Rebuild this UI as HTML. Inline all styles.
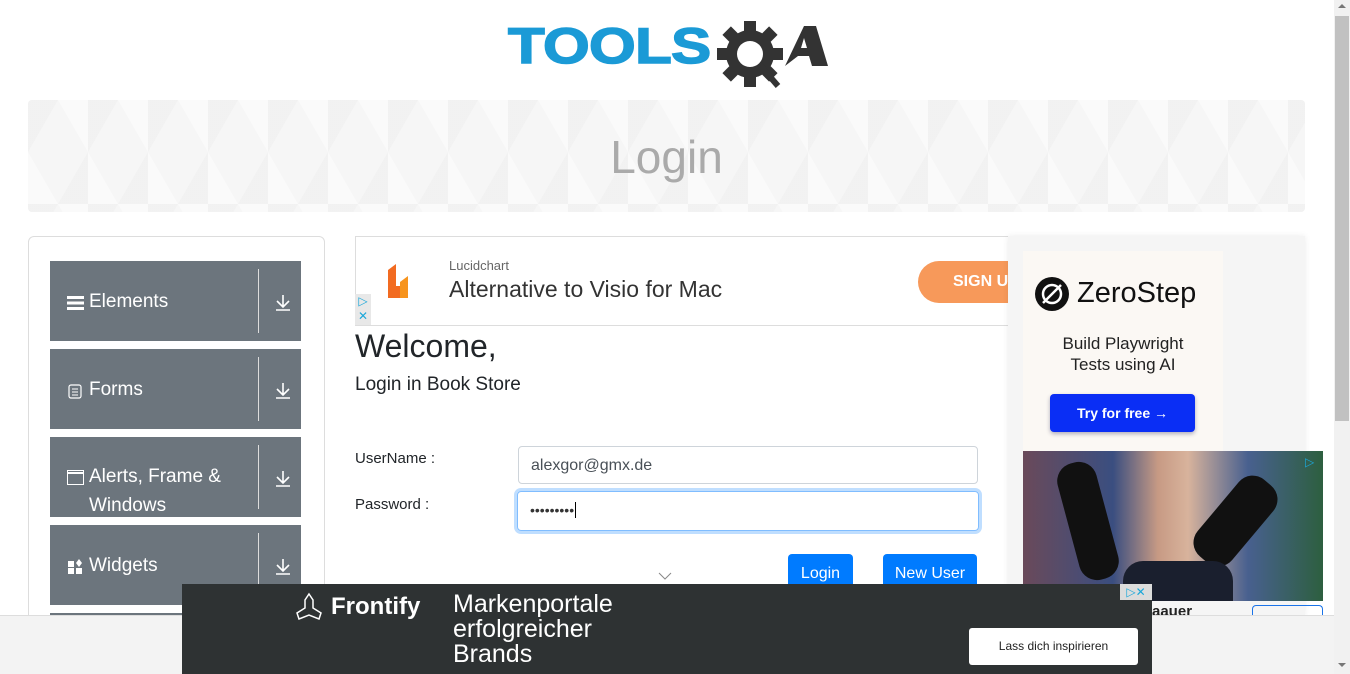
<!DOCTYPE html>
<html><head><meta charset="utf-8"><style>
*{box-sizing:border-box;margin:0;padding:0}
body{width:1350px;height:674px;overflow:hidden;background:#fff;font-family:"Liberation Sans",sans-serif;position:relative;color:#212529}
.abs{position:absolute}
.banner{left:28px;top:100px;width:1277px;height:112px;background:#f6f6f6;
background-image:linear-gradient(60deg,rgba(255,255,255,.45) 25%,transparent 25%,transparent 75%,rgba(255,255,255,.45) 75%),linear-gradient(-60deg,rgba(236,236,236,.45) 25%,transparent 25%,transparent 75%,rgba(236,236,236,.45) 75%);background-size:60px 104px;border-radius:4px}
.banner div{text-align:center;font-size:46px;color:#aaa;font-weight:300;margin-top:30px}
.side{left:28px;top:236px;width:297px;height:400px;border:1px solid #ddd;border-radius:6px}
.item{position:absolute;left:50px;width:251px;height:80px;background:#6c757d;color:#fff;font-size:19px}
.item .t{position:absolute;left:39px;top:26px;line-height:29px}
.item .sep{position:absolute;left:208px;top:8px;width:1px;height:64px;background:#ddd}
.item .ar{position:absolute;left:224px;top:32px;width:18px;height:18px}
.item .ic{position:absolute;left:17px;top:34px}
.lbl{font-size:15px;color:#212529}
.btn{background:#007bff;color:#fff;font-size:16px;border-radius:4px;text-align:center;line-height:36px}
</style></head><body>

<!-- logo -->
<div class="abs" style="left:508px;top:22px;font-weight:bold;font-size:50px;color:#1b9ad6;line-height:48px;transform:scaleX(1.2);transform-origin:left;letter-spacing:-0.5px;-webkit-text-stroke:1.5px #1b9ad6">TOOLS</div>
<svg class="abs" style="left:712px;top:16px" width="120" height="76" viewBox="0 0 120 76">
<g fill="#333">
<circle cx="38" cy="38" r="24"/>
<rect x="32" y="5" width="12" height="66"/><rect x="5" y="32" width="66" height="12"/>
<rect x="32" y="5" width="12" height="66" transform="rotate(45 38 38)"/><rect x="32" y="5" width="12" height="66" transform="rotate(-45 38 38)"/>
</g>
<circle cx="38" cy="38" r="13" fill="#fff"/>
<path d="M47 48 L66 70" stroke="#333" stroke-width="6"/>
<path d="M73 50 L92 10 L104 10 L116 50 L100 50 L97 40 L86 40 Z M89 32 L95 32 L92 22 Z" fill="#333" fill-rule="evenodd"/>
</svg>

<div class="abs banner"><div>Login</div></div>

<div class="abs side"></div>
<div class="item" style="top:261px"><svg class="ic" width="17" height="14" style="top:35px"><rect y="0" width="17" height="3" fill="#fff"/><rect y="5.5" width="17" height="3" fill="#fff"/><rect y="11" width="17" height="3" fill="#fff"/></svg><div class="t">Elements</div><div class="sep"></div><svg class="ar" viewBox="0 0 18 18"><path d="M9 2v11M3 8l6 6 6-6M2 17h14" stroke="#fff" stroke-width="1.6" fill="none"/></svg></div>
<div class="item" style="top:349px"><svg class="ic" width="14" height="15" style="left:18px;top:35px"><rect x="1" y="1" width="12" height="13" rx="2" fill="none" stroke="#fff" stroke-width="1.2"/><path d="M4 5h6M4 8h6M4 11h6" stroke="#fff"/></svg><div class="t">Forms</div><div class="sep"></div><svg class="ar" viewBox="0 0 18 18"><path d="M9 2v11M3 8l6 6 6-6M2 17h14" stroke="#fff" stroke-width="1.6" fill="none"/></svg></div>
<div class="item" style="top:437px"><svg class="ic" width="17" height="15" style="left:17px;top:33px"><rect x=".5" y=".5" width="16" height="14" fill="none" stroke="#fff"/><path d="M1 3h15" stroke="#fff" stroke-width="2"/></svg><div class="t" style="top:25px">Alerts, Frame &amp;<br>Windows</div><div class="sep"></div><svg class="ar" viewBox="0 0 18 18"><path d="M9 2v11M3 8l6 6 6-6M2 17h14" stroke="#fff" stroke-width="1.6" fill="none"/></svg></div>
<div class="item" style="top:525px"><svg class="ic" width="15" height="15" style="left:18px;top:34px"><rect x="0" y="2" width="6" height="6" fill="#fff"/><rect x="0" y="9" width="6" height="6" fill="#fff"/><rect x="8" y="9" width="6" height="6" fill="#fff"/><path d="M11 0l3 4-3 4-3-4z" fill="#fff"/></svg><div class="t">Widgets</div><div class="sep"></div><svg class="ar" viewBox="0 0 18 18"><path d="M9 2v11M3 8l6 6 6-6M2 17h14" stroke="#fff" stroke-width="1.6" fill="none"/></svg></div>
<div class="abs" style="left:50px;top:613px;width:251px;height:3px;background:#6c757d"></div>

<!-- lucid ad -->
<div class="abs" style="left:355px;top:236px;width:660px;height:90px;border:1px solid #ddd;border-right:none;overflow:hidden">
<svg class="abs" style="left:32px;top:27px" width="22" height="34"><path d="M0 6 L8 0 L8 22 L20 22 L20 34 L0 34 Z" fill="#f26b21"/><path d="M12 18 L20 12 L20 34 L12 34Z" fill="#f7941d"/></svg>
<div class="abs" style="left:93px;top:21px;font-size:13px;color:#666">Lucidchart</div>
<div class="abs" style="left:93px;top:39px;font-size:23px;color:#333">Alternative to Visio for Mac</div>
<div class="abs" style="left:562px;top:24px;width:130px;height:42px;border-radius:21px;background:#f7995a;color:#fff;font-weight:bold;font-size:16px;line-height:42px;padding-left:35px">SIGN UP</div>
</div>
<div class="abs" style="left:355px;top:294px;width:16px;height:31px;background:#e8e8e8;color:#1ba7d9;font-size:12px;line-height:15px;text-align:center">▷<br>✕</div>

<div class="abs" style="left:355px;top:328px;font-size:32px;color:#212529">Welcome,</div>
<div class="abs" style="left:355px;top:374px;font-size:19px">Login in Book Store</div>
<div class="abs lbl" style="left:355px;top:450px">UserName :</div>
<div class="abs lbl" style="left:355px;top:496px">Password :</div>
<div class="abs" style="left:518px;top:446px;width:460px;height:38px;border:1px solid #ced4da;border-radius:4px;font-size:16px;color:#495057;padding:10px 12px">alexgor@gmx.de</div>
<div class="abs" style="left:517px;top:491px;width:462px;height:40px;border:1px solid #80bdff;box-shadow:0 0 0 3px rgba(0,123,255,.25);border-radius:4px;font-size:14px;color:#333;padding:10px 12px;letter-spacing:0">•••••••••<span style="border-left:1px solid #000;margin-left:1px"></span></div>
<svg class="abs" style="left:658px;top:572px" width="14" height="8"><path d="M1 1l6 6 6-6" stroke="#888" fill="none"/></svg>
<div class="abs btn" style="left:788px;top:554px;width:65px;height:40px;line-height:40px">Login</div>
<div class="abs btn" style="left:883px;top:554px;width:94px;height:40px;line-height:40px">New User</div>

<!-- right ad -->
<div class="abs" style="left:1008px;top:236px;width:297px;height:380px;background:#f5f5f5;box-shadow:0 0 6px rgba(0,0,0,.08)"></div>
<div class="abs" style="left:1023px;top:251px;width:200px;height:200px;background:#fbf8f4"></div>
<svg class="abs" style="left:1034px;top:276px" width="36" height="36"><circle cx="18" cy="18" r="17" fill="#111"/><circle cx="18" cy="18" r="9" fill="none" stroke="#fff" stroke-width="2.5"/><path d="M9 27L27 9" stroke="#fff" stroke-width="2.5"/></svg>
<div class="abs" style="left:1077px;top:277px;font-size:29px;color:#111">ZeroStep</div>
<div class="abs" style="left:1023px;top:333px;width:200px;text-align:center;font-size:17px;line-height:21px;color:#222">Build Playwright<br>Tests using AI</div>
<div class="abs" style="left:1050px;top:394px;width:145px;height:38px;background:#0a2ef5;border-radius:4px;color:#fff;font-weight:bold;font-size:14px;line-height:38px;text-align:center;box-shadow:0 2px 4px rgba(0,0,60,.3)">Try for free →</div>
<div class="abs" style="left:1023px;top:451px;width:300px;height:150px;overflow:hidden;background:linear-gradient(90deg,#6a4a5a 0%,#3a4e80 30%,#c79a84 45%,#d8b39c 55%,#48608f 75%,#2d5f3f 100%)">
<div class="abs" style="left:45px;top:10px;width:40px;height:120px;background:#111;border-radius:18px;transform:rotate(-15deg)"></div>
<div class="abs" style="left:190px;top:20px;width:45px;height:100px;background:#111;border-radius:18px;transform:rotate(40deg)"></div>
<div class="abs" style="left:100px;top:110px;width:110px;height:40px;background:#1a1f2e;border-radius:20px 20px 0 0"></div>
</div>
<div class="abs" style="left:1305px;top:455px;color:#1ba7d9;font-size:12px">▷</div>
<div class="abs" style="left:1252px;top:605px;width:71px;height:12px;border:1px solid #1a73e8;border-bottom:none;border-radius:4px 4px 0 0"></div>

<!-- bottom bar -->
<div class="abs" style="left:0;top:615px;width:1334px;height:59px;background:#f3f3f3;border-top:1px solid #ddd"></div>
<div class="abs" style="left:182px;top:584px;width:970px;height:90px;background:#2e3233"></div>
<svg class="abs" style="left:293px;top:592px" width="33" height="30"><path d="M16 2l4 6v8l8 5-2 6-10-4-10 4-2-6 8-5V8z" fill="none" stroke="#fff" stroke-width="1.5"/></svg>
<div class="abs" style="left:331px;top:593px;font-size:24px;font-weight:bold;color:#fff">Frontify</div>
<div class="abs" style="left:453px;top:592px;font-size:25px;line-height:25px;color:#fff">Markenportale<br>erfolgreicher<br>Brands</div>
<div class="abs" style="left:969px;top:628px;width:169px;height:37px;background:#fff;border-radius:3px;font-size:12px;color:#222;line-height:37px;text-align:center">Lass dich inspirieren</div>
<div class="abs" style="left:1120px;top:584px;width:32px;height:16px;background:#dcdcdc;color:#1ba7d9;font-size:12px;line-height:16px;text-align:center">▷✕</div>
<div class="abs" style="left:1152px;top:604px;font-size:15px;font-weight:bold;color:#222;height:11px;overflow:hidden;line-height:16px">aauer</div>

<!-- scrollbar -->
<div class="abs" style="left:1334px;top:0;width:16px;height:674px;background:#f1f1f1"></div>
<div class="abs" style="left:1335px;top:16px;width:14px;height:405px;background:#c1c1c1"></div>
<div class="abs" style="left:1338px;top:4px;width:0;height:0;border:4px solid transparent;border-bottom-color:#777;border-top:none"></div>
<div class="abs" style="left:1338px;top:663px;width:0;height:0;border:4px solid transparent;border-top-color:#777;border-bottom:none"></div>
</body></html>
